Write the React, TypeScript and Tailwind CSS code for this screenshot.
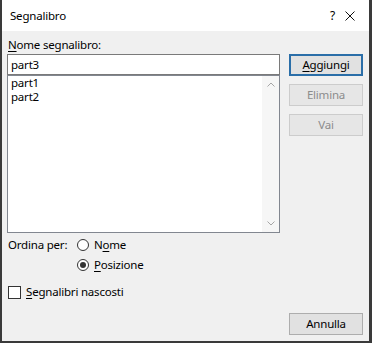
import { useState } from "react";

const font = { fontFamily: '"Noto Sans", "Open Sans", sans-serif' };

function Btn({
  label,
  accel,
  disabled,
  focused,
  className = "",
}: {
  label: string;
  accel?: number;
  disabled?: boolean;
  focused?: boolean;
  className?: string;
}) {
  const text =
    accel === undefined ? (
      label
    ) : (
      <>
        {label.slice(0, accel)}
        <span className="underline underline-offset-2">{label[accel]}</span>
        {label.slice(accel + 1)}
      </>
    );
  return (
    <button
      className={`flex h-[22px] w-[74px] items-center justify-center text-[11.5px] leading-none tracking-[-0.2px] ${
        focused
          ? "border-2 border-[#2a6ea8] bg-[#e1e1e1] text-black"
          : disabled
          ? "border border-[#cccccc] bg-[#e6e6e6] text-[#8c8c8c]"
          : "border border-[#adadad] bg-[#e1e1e1] text-black"
      } ${className}`}
    >
      {text}
    </button>
  );
}

function Radio({ checked }: { checked?: boolean }) {
  return (
    <span className="flex h-[12px] w-[12px] items-center justify-center rounded-full border border-[#333333] bg-white">
      {checked && <span className="h-[6px] w-[6px] rounded-full bg-[#333333]" />}
    </span>
  );
}

export default function App() {
  const [name, setName] = useState("part3");
  const bookmarks = ["part1", "part2"];

  return (
    <div
      className="flex h-[343px] w-[372px] flex-col border-b-2 border-l-2 border-r-[3px] border-[#3a3a3a] bg-[#f0f0f0] text-black"
      style={font}
    >
      {/* title bar */}
      <div className="flex h-[31px] shrink-0 items-center bg-white pl-[8px] text-[11.5px] tracking-[-0.2px]">
        <span>Segnalibro</span>
        <span className="ml-auto mr-[10px] text-[12px] leading-none">?</span>
        <svg width="10" height="10" viewBox="0 0 10 10" className="mr-[14px]">
          <path d="M0.5 0.5 L9.5 9.5 M9.5 0.5 L0.5 9.5" stroke="#111" strokeWidth="1" />
        </svg>
      </div>

      {/* body */}
      <div className="flex flex-1 pl-[5px] pb-[6px]">
        <div className="flex w-[273px] flex-col text-[11.5px] tracking-[-0.2px]">
          <div className="mt-[6px] h-[17px] pl-[1px] leading-[16px]">
            <span className="underline underline-offset-2">N</span>ome segnalibro:
          </div>
          <input
            value={name}
            onChange={(e) => setName(e.target.value)}
            className="h-[21px] w-full border border-[#7a7a7a] bg-white pl-[3px] text-[11.5px] outline-none"
          />
          <div className="flex h-[158px] border border-[#828790] bg-white">
            <div className="flex-1 pl-[3px] leading-[14px]">
              {bookmarks.map((b) => (
                <div key={b}>{b}</div>
              ))}
            </div>
            <div className="flex w-[17px] flex-col items-center justify-between bg-[#f6f6f6] py-[6px]">
              <svg width="8" height="5" viewBox="0 0 8 5">
                <path d="M0.5 4.5 L4 1 L7.5 4.5" fill="none" stroke="#a6a6a6" strokeWidth="1" />
              </svg>
              <svg width="8" height="5" viewBox="0 0 8 5">
                <path d="M0.5 0.5 L4 4 L7.5 0.5" fill="none" stroke="#a6a6a6" strokeWidth="1" />
              </svg>
            </div>
          </div>

          <div className="mt-[4px] flex h-[16px] items-center">
            <span className="w-[70px] pl-[1px]">Ordina per:</span>
            <Radio />
            <span className="ml-[5px]">
              N<span className="underline underline-offset-2">o</span>me
            </span>
          </div>
          <div className="mt-[4px] flex h-[16px] items-center pl-[70px]">
            <Radio checked />
            <span className="ml-[5px]">
              <span className="underline underline-offset-2">P</span>osizione
            </span>
          </div>
          <div className="mt-[11px] flex h-[16px] items-center pl-[1px]">
            <span className="h-[13px] w-[13px] border border-[#333333] bg-white" />
            <span className="ml-[5px]">
              <span className="underline underline-offset-2">S</span>egnalibri nascosti
            </span>
          </div>
        </div>

        <div className="ml-[9px] flex flex-col">
          <Btn label="Aggiungi" accel={0} focused className="mt-[23px]" />
          <Btn label="Elimina" disabled className="mt-[8px]" />
          <Btn label="Vai" disabled className="mt-[8px]" />
          <Btn label="Annulla" className="mt-auto" />
        </div>
      </div>
    </div>
  );
}
